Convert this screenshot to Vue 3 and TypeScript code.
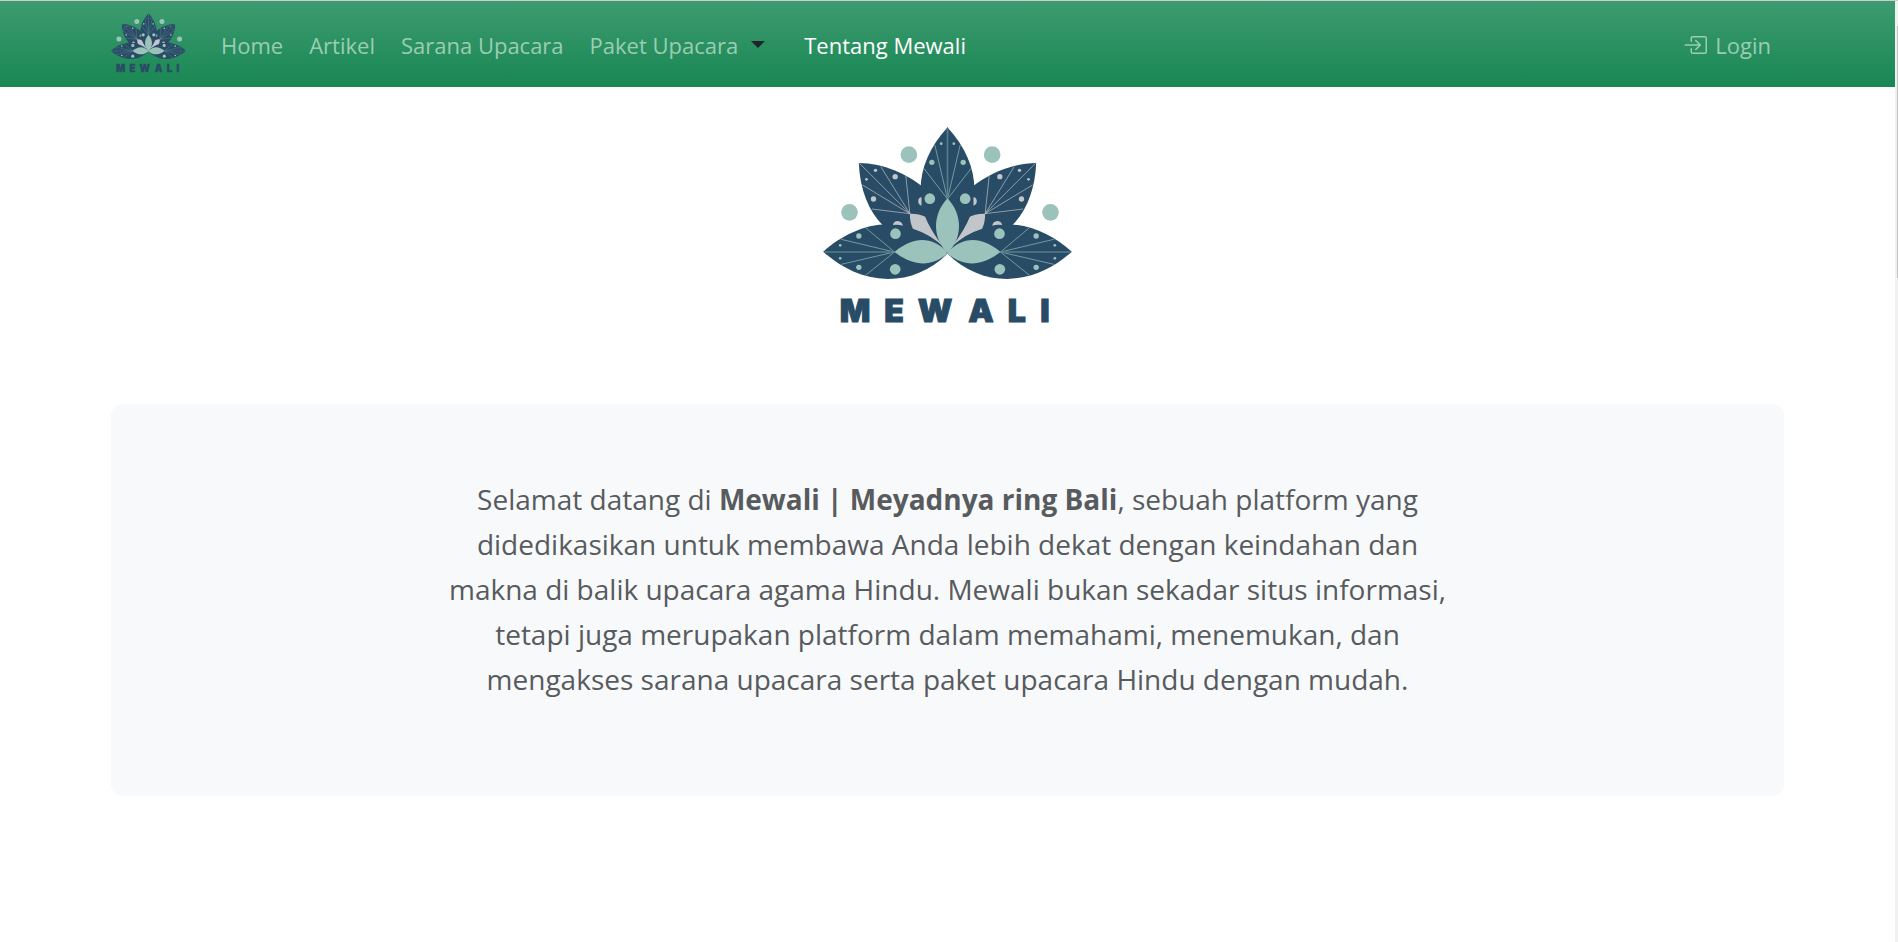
<script setup lang="ts">
import { defineComponent, h } from 'vue'

interface NavItem {
  label: string
}

const leading: NavItem[] = [{ label: 'Home' }, { label: 'Artikel' }, { label: 'Sarana Upacara' }]

const navy = '#284b66'
const mint = '#9cc3bb'
const grey = '#c2c5c9'

// Dots that float around the flower.
const outerDots = [[295, 135], [117, 308], [545, 135], [720, 308]]

// One half of the lotus; the other half is its mirror image around x = 411.
const mintDots = [
  [392, 102, 4], [364, 158, 8], [358, 267, 16],
  [255, 372, 16], [254, 479, 16], [145, 379, 8], [145, 473, 8], [89, 407, 4], [89, 446, 4],
]
const greyDots = [[195, 182, 5], [168, 209, 4], [254, 201, 8], [189, 268, 8]]
const mintRays =
  'M411 268L373 106M411 268L340 176M252 427L165 354M252 427L92 389M252 427L92 464M252 427L165 497'
const greyRays = 'M298 312L147 161M298 312L211 171M298 312L286 199M298 312L156 226M298 312L184 298'

const half = () => [
  h('path', { fill: navy, d: 'M145 160C220 160 290 195 335 230L411 430L216 346C175 305 148 240 145 160Z' }),
  h('path', { fill: navy, d: 'M38 426C90 380 160 344 232 344C310 344 370 380 415 428C365 480 300 508 232 508C150 505 90 472 38 426Z' }),
  h('path', { fill: navy, d: 'M412 52C303 170 303 310 412 430Z' }),
  h('path', { fill: grey, d: 'M333 262Q323 264 323 275Q324 286 333 288ZM247 346Q250 334 262 334Q274 335 277 348Q262 344 247 346Z' }),
  h('path', { fill: grey, d: 'M298 312Q325 311 344 321Q358 358 397 410Q360 374 307 357Q298 338 298 312Z' }),
  h('path', { stroke: grey, 'stroke-width': 2, fill: 'none', d: greyRays }),
  h('path', { stroke: mint, 'stroke-width': 2, fill: 'none', d: mintRays }),
  h('path', { stroke: '#527f88', 'stroke-width': 5, fill: 'none', d: 'M252 427L42 427' }),
  ...greyDots.map(([cx, cy, r]) => h('circle', { cx, cy, r, fill: grey })),
  ...mintDots.map(([cx, cy, r]) => h('circle', { cx, cy, r, fill: mint })),
  h('path', { fill: mint, d: 'M252 427C310 379 365 379 413 430C365 472 310 472 252 427Z' }),
]

const MewaliLogo = defineComponent({
  render: () =>
    h('svg', { viewBox: '38 52 746 612', role: 'img', 'aria-label': 'Mewali' }, [
      ...outerDots.map(([cx, cy]) => h('circle', { cx, cy, r: 25, fill: mint })),
      h('g', half()),
      h('g', { transform: 'translate(822 0) scale(-1 1)' }, half()),
      h('path', { stroke: '#527f88', 'stroke-width': 5, d: 'M411 56V268' }),
      h('path', { fill: mint, d: 'M411 266C365 315 365 385 411 430C457 385 457 315 411 266Z' }),
      h(
        'text',
        {
          x: '88 221 322 473 592 689',
          y: 637,
          fill: navy,
          stroke: navy,
          'stroke-width': 3,
          'font-family': 'Inter, sans-serif',
          'font-weight': 900,
          'font-size': 96,
        },
        'MEWALI',
      ),
    ]),
})
</script>

<template>
  <div class="shell">
    <div class="page">
      <header class="navbar">
        <nav class="container bar">
          <a class="brand" href="#"><MewaliLogo /></a>
          <a v-for="item in leading" :key="item.label" class="link" href="#">{{ item.label }}</a>
          <a class="link" href="#">Paket Upacara</a>
          <button class="toggle" type="button" aria-label="Paket Upacara menu"><span class="caret"></span></button>
          <a class="link active" href="#" aria-current="page">Tentang Mewali</a>
          <a class="link login" href="#">
            <svg viewBox="0 0 16 16" fill="currentColor" aria-hidden="true">
              <path fill-rule="evenodd" d="M6 3.5a.5.5 0 0 1 .5-.5h8a.5.5 0 0 1 .5.5v9a.5.5 0 0 1-.5.5h-8a.5.5 0 0 1-.5-.5v-2a.5.5 0 0 0-1 0v2A1.5 1.5 0 0 0 6.5 14h8a1.5 1.5 0 0 0 1.5-1.5v-9A1.5 1.5 0 0 0 14.5 2h-8A1.5 1.5 0 0 0 5 3.5v2a.5.5 0 0 0 1 0v-2z" />
              <path fill-rule="evenodd" d="M11.854 8.354a.5.5 0 0 0 0-.708l-3-3a.5.5 0 1 0-.708.708L10.293 7.5H1.5a.5.5 0 0 0 0 1h8.793l-2.147 2.146a.5.5 0 0 0 .708.708l3-3z" />
            </svg>
            Login
          </a>
        </nav>
      </header>
      <main class="container">
        <div class="hero"><MewaliLogo /></div>
        <section class="panel">
          <p>
            Selamat datang di <strong>Mewali | Meyadnya ring Bali</strong>, sebuah platform yang
            didedikasikan untuk membawa Anda lebih dekat dengan keindahan dan makna di balik upacara
            agama Hindu. Mewali bukan sekadar situs informasi, tetapi juga merupakan platform dalam
            memahami, menemukan, dan mengakses sarana upacara serta paket upacara Hindu dengan mudah.
          </p>
        </section>
      </main>
    </div>
    <div class="track" aria-hidden="true"><div class="thumb"></div></div>
  </div>
</template>

<style>
body {
  margin: 0;
  background: #fff;
}
</style>

<style scoped>
.shell {
  display: flex;
  min-height: 100vh;
  box-sizing: border-box;
  border-top: 1px solid #cdcdcd;
  font-family: 'Open Sans', 'Noto Sans', sans-serif;
}
.page {
  flex: 1;
  min-width: 0;
}
.container {
  width: calc(100% - 222px);
  margin: 0 auto;
}
.navbar {
  background: linear-gradient(#3d9b6f, #198754);
}
.bar {
  display: flex;
  align-items: center;
  height: 86px;
}
.brand {
  display: flex;
  margin-right: 22px;
}
.brand svg {
  width: 75px;
  height: 62px;
}
.link {
  padding: 2px 13px 0;
  color: #9bcdb3;
  font-size: 22px;
  line-height: 36px;
  text-decoration: none;
  white-space: nowrap;
}
.link.active {
  color: #fff;
}
.toggle {
  display: flex;
  margin-right: 26px;
  padding: 8px 0;
  border: 0;
  background: none;
}
.caret {
  border: 7px solid transparent;
  border-top-color: #212529;
  border-bottom: 0;
}
.login {
  display: flex;
  align-items: center;
  gap: 8px;
  margin-left: auto;
}
.login svg {
  width: 24px;
  height: 24px;
}
.hero {
  display: flex;
  justify-content: center;
  padding: 40px 0 73px;
}
.hero svg {
  width: 249px;
  height: 204px;
}
.panel {
  padding: 73px 24px 94px;
  border-radius: 12px;
  background: #f8f9fb;
}
.panel p {
  max-width: 1010px;
  margin: 0 auto;
  color: #575b5e;
  font-size: 28px;
  line-height: 45px;
  text-align: center;
}
.track {
  width: 3px;
  background: #f1f1f1;
}
.thumb {
  width: 1px;
  height: 252px;
  margin: 25px 0 0 auto;
  background: #c1c1c1;
}
</style>
